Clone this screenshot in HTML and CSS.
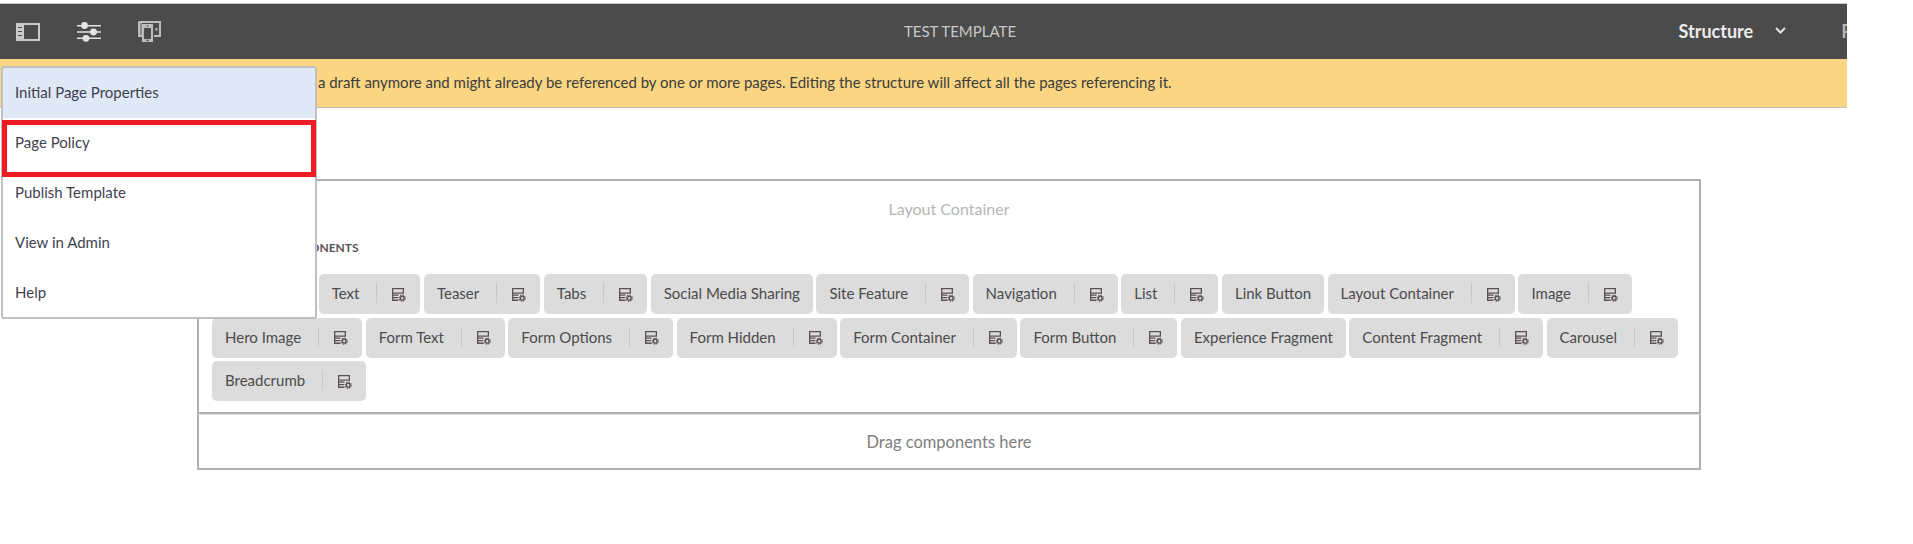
FILE: index.html
```html
<!DOCTYPE html>
<html lang="en">
<head>
<meta charset="utf-8">
<title>Test Template</title>
<link rel="stylesheet" href="styles.css">
</head>
<body>
<svg class="defs" width="0" height="0" aria-hidden="true">
  <symbol id="policy" viewBox="0 0 14 14">
    <path fill="currentColor" fill-rule="evenodd" d="M0 0h12v5.800H1.300v.6H6.500v1.300H1.300v1.200H6v1.300H1.300v1.200H6.500V13H0zM1.300 1.300v3.200h9.400V1.300z"/>
    <circle cx="10.200" cy="10.200" r="1.900" fill="none" stroke="currentColor" stroke-width="1.400"/>
    <circle cx="10.200" cy="10.200" r="3.100" fill="none" stroke="currentColor" stroke-width="1.100" stroke-dasharray="1.300 1.130"/>
  </symbol>
</svg>
<div class="page">
  <header class="toolbar">
    <div class="tools">
      <svg class="tool" width="24" height="18" viewBox="0 0 24 18"><path fill="#c9c9c9" fill-rule="evenodd" d="M0 0h24v18H0zM8 2v14h14V2zM2 4v1h4V4zm0 4v1h4V8zm0 4v1h4v-1z"/></svg>
      <svg class="tool" width="24" height="20" viewBox="0 0 24 20"><g fill="#e4e4e4"><path d="M0 3h24v1.400H0zM0 9.300h24v1.400H0zM0 15.600h24V17H0z"/><circle cx="7.500" cy="3.500" r="3.400"/><circle cx="16.500" cy="10" r="3.400"/><circle cx="9" cy="16.300" r="3.400"/></g></svg>
      <svg class="tool" width="23" height="21" viewBox="0 0 23 21"><path fill="#8c8c8c" d="M2 2h2v13H2z"/><path fill="#bdbdbd" fill-rule="evenodd" d="M1 0h22v16h-7v-2h5V2H2v12h2v2H0V1zM4 3h11v18H4zM6 7v11h7V7zM17.500 7h2v2.500h-2zM8.500 4.500h2v1h-2zM8.500 18.800h2v1.400h-2z"/></svg>
    </div>
    <div class="title">TEST TEMPLATE</div>
    <div class="modes">
      <span class="mode-on">Structure</span>
      <svg class="chev" width="11" height="7" viewBox="0 0 11 7"><path fill="none" stroke="#e4e4e4" stroke-width="2" d="M1 1l4.500 4.500L10 1"/></svg>
      <span class="mode-off">Preview</span>
    </div>
  </header>
  <div class="banner">This template is not a draft anymore and might already be referenced by one or more pages. Editing the structure will affect all the pages referencing it.</div>
  <main class="canvas">
    <section class="container">
      <div class="container-title">Layout Container</div>
      <div class="label">ALLOWED COMPONENTS</div>
      <div class="pills">
        <div class="pill"><span>Title</span><i class="sep"></i><svg class="ico"><use href="#policy"/></svg></div>
        <div class="pill"><span>Text</span><i class="sep"></i><svg class="ico"><use href="#policy"/></svg></div>
        <div class="pill"><span>Teaser</span><i class="sep"></i><svg class="ico"><use href="#policy"/></svg></div>
        <div class="pill"><span>Tabs</span><i class="sep"></i><svg class="ico"><use href="#policy"/></svg></div>
        <div class="pill"><span>Social Media Sharing</span></div>
        <div class="pill"><span>Site Feature</span><i class="sep"></i><svg class="ico"><use href="#policy"/></svg></div>
        <div class="pill"><span>Navigation</span><i class="sep"></i><svg class="ico"><use href="#policy"/></svg></div>
        <div class="pill"><span>List</span><i class="sep"></i><svg class="ico"><use href="#policy"/></svg></div>
        <div class="pill"><span>Link Button</span></div>
        <div class="pill"><span>Layout Container</span><i class="sep"></i><svg class="ico"><use href="#policy"/></svg></div>
        <div class="pill"><span>Image</span><i class="sep"></i><svg class="ico"><use href="#policy"/></svg></div>
        <div class="pill"><span>Hero Image</span><i class="sep"></i><svg class="ico"><use href="#policy"/></svg></div>
        <div class="pill"><span>Form Text</span><i class="sep"></i><svg class="ico"><use href="#policy"/></svg></div>
        <div class="pill"><span>Form Options</span><i class="sep"></i><svg class="ico"><use href="#policy"/></svg></div>
        <div class="pill"><span>Form Hidden</span><i class="sep"></i><svg class="ico"><use href="#policy"/></svg></div>
        <div class="pill"><span>Form Container</span><i class="sep"></i><svg class="ico"><use href="#policy"/></svg></div>
        <div class="pill"><span>Form Button</span><i class="sep"></i><svg class="ico"><use href="#policy"/></svg></div>
        <div class="pill"><span>Experience Fragment</span></div>
        <div class="pill"><span>Content Fragment</span><i class="sep"></i><svg class="ico"><use href="#policy"/></svg></div>
        <div class="pill"><span>Carousel</span><i class="sep"></i><svg class="ico"><use href="#policy"/></svg></div>
        <div class="pill"><span>Breadcrumb</span><i class="sep"></i><svg class="ico"><use href="#policy"/></svg></div>
      </div>
    </section>
    <section class="dropzone">Drag components here</section>
  </main>
  <nav class="menu">
    <div class="menu-item active">Initial Page Properties</div>
    <div class="menu-item">Page Policy</div>
    <div class="menu-item">Publish Template</div>
    <div class="menu-item">View in Admin</div>
    <div class="menu-item">Help</div>
  </nav>
  <div class="callout"></div>
</div>
</body>
</html>
```
FILE: styles.css
```css
* { box-sizing: border-box; }
html, body { margin: 0; background: #fff; }
body { font-family: Lato, "Open Sans", sans-serif; color: #4b4b4b; font-size: 15px; overflow: hidden; height: 544px; }
.defs { position: absolute; }
.page { position: relative; width: 1847px; height: 544px; overflow: hidden; padding-top: 3px; }
.toolbar { height: 56px; background: #4b4b4b; border-top: 1px solid #c8c8c8; display: flex; align-items: center; position: relative; color: #e4e4e4; }
.tools { display: flex; align-items: center; padding-left: 16px; gap: 37px; }
.title { position: absolute; left: 860px; top: 0; width: 200px; line-height: 54px; text-align: center; font-size: 15px; color: #c8c8c8; white-space: nowrap; }
.modes { margin-left: auto; margin-right: -59px; display: flex; align-items: center; padding-bottom: 2px; }
.mode-on { font-weight: 700; font-size: 18px; color: #ececec; }
.chev { margin-left: 22px; }
.mode-off { margin-left: 55px; font-size: 18px; font-weight: 700; color: #b5b5b5; }
.banner { height: 49px; background: #fad682; border-bottom: 1px solid #bdbdbd; font-size: 15px; line-height: 47px; color: #3c3c3c; padding-left: 185px; white-space: nowrap; }
.canvas { margin: 71px 146px 0 197px; }
.container { border: 2px solid #b0b0b0; height: 235px; padding: 0 13px; }
.container-title { text-align: center; font-size: 16px; line-height: 20px; padding-top: 18px; color: #b6b6b6; box-sizing: content-box; height: 20px; }
.label { font-size: 12px; font-weight: 700; color: #555; line-height: 14px; margin-top: 22px; }
.pills { display: flex; flex-wrap: wrap; gap: 3.5px; margin-top: 19px; }
.pill { height: 40px; background: #dcdcdc; border-radius: 5px; padding: 0 13px 2px; display: flex; align-items: center; font-size: 15px; color: #4b4b4b; white-space: nowrap; }
.sep { width: 1px; height: 20px; background: #c8c8c8; margin-left: 17px; }
.ico { width: 14px; height: 14px; margin-left: 15px; margin-right: 1px; color: #5a5252; margin-top: 3px; }
.dropzone { height: 56px; border: 2px solid #b0b0b0; border-top: 1px solid #e0e0e0; text-align: center; line-height: 54px; font-size: 16.500px; color: #808080; }
.menu { position: absolute; left: 1px; top: 66px; width: 316px; height: 253px; background: #fff; border: 2px solid #c0c0c0; border-radius: 3px; }
.menu-item { height: 50px; line-height: 48px; padding-left: 12px; font-size: 15px; color: #3f3f50; }
.menu-item.active { background: #dfe8f6; }
.callout { position: absolute; left: 2px; top: 120px; width: 314px; height: 57px; border: 5px solid #ed1c24; }
```
